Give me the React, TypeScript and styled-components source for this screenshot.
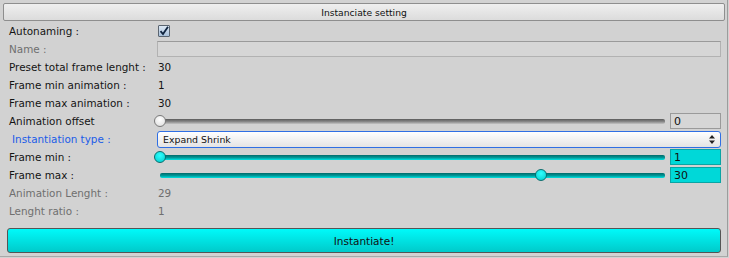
import styled, { createGlobalStyle } from "styled-components";

const GlobalStyle = createGlobalStyle`
  html, body {
    margin: 0;
    padding: 0;
    background: #d2d2d2;
  }
  * {
    box-sizing: border-box;
  }
`;

type Tone = "normal" | "muted" | "accent";

const labelColors: Record<Tone, string> = {
  normal: "#141414",
  muted: "#6f6f6f",
  accent: "#1a5ce8",
};

export default function App() {
  return (
    <>
      <GlobalStyle />
      <Window>
        <Header>Instanciate setting</Header>
        <Form>
          <Row>
            <Label>Autonaming :</Label>
            <Checkbox>
              <svg width="10" height="10" viewBox="0 0 10 10">
                <path d="M1.5 5.2 L4 8 L9 0.8" fill="none" stroke="#10243f" strokeWidth="1.8" />
              </svg>
            </Checkbox>
          </Row>
          <Row>
            <Label $tone="muted">Name :</Label>
            <TextField />
          </Row>
          <Row>
            <Label>Preset total frame lenght :</Label>
            <Value>30</Value>
          </Row>
          <Row>
            <Label>Frame min animation :</Label>
            <Value>1</Value>
          </Row>
          <Row>
            <Label>Frame max animation :</Label>
            <Value>30</Value>
          </Row>
          <Row>
            <Label>Animation offset</Label>
            <SliderField value={0} min={0} max={29} />
          </Row>
          <Row>
            <Label $tone="accent" $indent>Instantiation type :</Label>
            <Select>
              <span>Expand Shrink</span>
              <svg width="6" height="9" viewBox="0 0 6 9">
                <path d="M3 0 L6 3.5 L0 3.5 Z M3 9 L6 5.5 L0 5.5 Z" fill="#222" />
              </svg>
            </Select>
          </Row>
          <Row>
            <Label>Frame min :</Label>
            <SliderField value={1} min={1} max={30} cyan />
          </Row>
          <Row>
            <Label>Frame max :</Label>
            <SliderField value={30} min={1} max={39.4} cyan />
          </Row>
          <Row>
            <Label $tone="muted">Animation Lenght :</Label>
            <Value $muted>29</Value>
          </Row>
          <Row>
            <Label $tone="muted">Lenght ratio :</Label>
            <Value $muted>1</Value>
          </Row>
        </Form>
        <Button>Instantiate!</Button>
      </Window>
    </>
  );
}

function SliderField({ value, min, max, cyan = false }: { value: number; min: number; max: number; cyan?: boolean }) {
  const pct = ((value - min) / (max - min)) * 100;
  return (
    <SliderRow>
      <Track $cyan={cyan}>
        <Knob $cyan={cyan} style={{ left: `${pct}%` }} />
      </Track>
      <NumberField $cyan={cyan}>{value}</NumberField>
    </SliderRow>
  );
}

const Window = styled.div`
  width: 728px;
  height: 257px;
  display: flex;
  flex-direction: column;
  border-right: 1px solid #9c9c9c;
  border-bottom: 1px solid #a8a8a8;
  font-family: "DejaVu Sans", "Liberation Sans", sans-serif;
  font-size: 10.4px;
  color: #141414;
`;

const Header = styled.div`
  margin: 3px 2px 0 3px;
  height: 18px;
  display: flex;
  align-items: center;
  justify-content: center;
  border: 1px solid #8e8e8e;
  border-radius: 2px;
  background: linear-gradient(#efefef, #dcdcdc);
  font-size: 9.2px;
  color: #111;
`;

const Form = styled.div`
  display: flex;
  flex-direction: column;
  padding: 1px 6px 0 9px;
`;

const Row = styled.div`
  height: 18px;
  display: grid;
  grid-template-columns: 148px 1fr;
  align-items: center;
`;

const Label = styled.div<{ $tone?: Tone; $indent?: boolean }>`
  color: ${(p) => labelColors[p.$tone ?? "normal"]};
  padding-left: ${(p) => (p.$indent ? "3px" : "0")};
  white-space: nowrap;
`;

const Value = styled.div<{ $muted?: boolean }>`
  padding-left: 1px;
  color: ${(p) => (p.$muted ? "#6f6f6f" : "#141414")};
`;

const Checkbox = styled.div`
  width: 12px;
  height: 12px;
  margin-left: 1px;
  display: flex;
  align-items: center;
  justify-content: center;
  border: 1px solid #5a6470;
  border-radius: 1px;
  background: linear-gradient(#dce8f4, #a8c0da);
`;

const TextField = styled.div`
  height: 16px;
  border: 1px solid #b2b2b2;
  border-top-color: #9a9a9a;
  background: #d6d6d6;
`;

const SliderRow = styled.div`
  display: grid;
  grid-template-columns: 1fr 51px;
  gap: 5px;
  align-items: center;
`;

const Track = styled.div<{ $cyan: boolean }>`
  position: relative;
  height: 5px;
  margin: 0 0 0 3px;
  border-radius: 2px;
  background: ${(p) =>
    p.$cyan ? "linear-gradient(#006a6a, #009a9a 55%, #00e4e4)" : "linear-gradient(#5a5a5a, #8a8a8a 55%, #c4c4c4)"};
`;

const Knob = styled.div<{ $cyan: boolean }>`
  position: absolute;
  top: 50%;
  width: 12px;
  height: 12px;
  margin: -6px 0 0 -6px;
  border-radius: 50%;
  border: 1px solid ${(p) => (p.$cyan ? "#0a6f6f" : "#7a7a7a")};
  background: ${(p) =>
    p.$cyan ? "radial-gradient(circle at 50% 35%, #30ffff, #00cccc)" : "radial-gradient(circle at 50% 35%, #ffffff, #dcdcdc)"};
`;

const NumberField = styled.div<{ $cyan: boolean }>`
  height: 16px;
  padding: 0 3px;
  display: flex;
  align-items: center;
  font-size: 11px;
  border: 1px solid ${(p) => (p.$cyan ? "#0aa4a4" : "#9a9a9a")};
  background: ${(p) => (p.$cyan ? "#00d8d8" : "#d6d6d6")};
  color: #111;
`;

const Select = styled.div`
  height: 17px;
  padding: 0 5px 0 5px;
  display: flex;
  align-items: center;
  justify-content: space-between;
  border: 1px solid #2f6fe4;
  border-radius: 3px;
  background: linear-gradient(#ffffff, #e4e4e4);
  font-size: 9.4px;
  color: #111;
`;

const Button = styled.div`
  margin: auto 6px 3px 7px;
  height: 25px;
  display: flex;
  align-items: center;
  justify-content: center;
  border: 1px solid #555;
  border-radius: 3px;
  background: linear-gradient(#00fafa, #00caca);
  font-size: 10.5px;
  color: #111;
`;
